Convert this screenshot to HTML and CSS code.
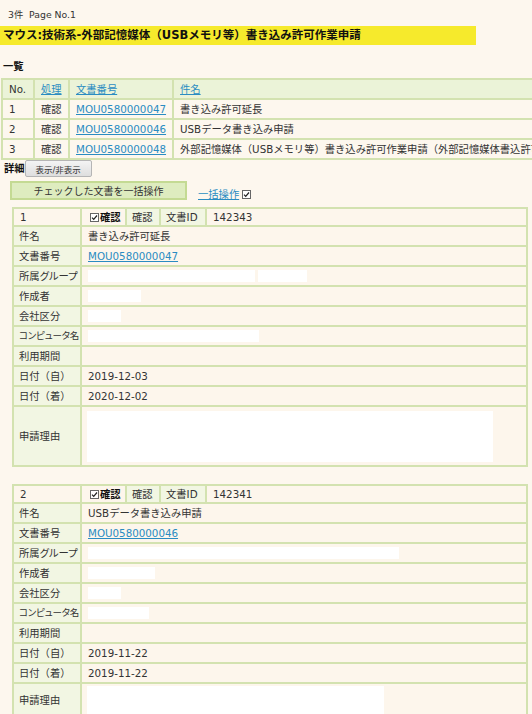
FILE: index.html
```html
<!DOCTYPE html>
<html lang="ja">
<head>
<meta charset="utf-8">
<title>一覧</title>
<link rel="stylesheet" href="styles.css">
</head>
<body>
<div class="count">3件&nbsp; Page No.1</div>
<h1 class="title">マウス:技術系-外部記憶媒体（USBメモリ等）書き込み許可作業申請</h1>
<div class="section-label">一覧</div>
<div class="list-wrap">
  <table class="list">
    <tr class="head">
      <td class="c-no">No.</td>
      <td class="c-op"><a href="#">処理</a></td>
      <td class="c-doc"><a href="#">文書番号</a></td>
      <td class="c-name"><a href="#">件名</a></td>
    </tr>
    <tr>
      <td>1</td><td>確認</td><td><a href="#">MOU0580000047</a></td><td>書き込み許可延長</td>
    </tr>
    <tr>
      <td>2</td><td>確認</td><td><a href="#">MOU0580000046</a></td><td>USBデータ書き込み申請</td>
    </tr>
    <tr>
      <td>3</td><td>確認</td><td><a href="#">MOU0580000048</a></td><td>外部記憶媒体（USBメモリ等）書き込み許可作業申請（外部記憶媒体書込許可申請）</td>
    </tr>
  </table>
</div>
<div class="detail-row">
  <span class="detail-label">詳細</span>
  <button class="toggle-btn" type="button">表示/非表示</button>
</div>
<div class="bulk-row">
  <button class="bulk-btn" type="button">チェックした文書を一括操作</button>
  <a href="#" class="bulk-link">一括操作</a>
  <svg class="cb" width="9" height="9" viewBox="0 0 9 9"><rect x="0.5" y="0.5" width="8" height="8" fill="#fff" stroke="#666"/><path d="M2 4.6 L3.7 6.3 L7 2.5" fill="none" stroke="#222" stroke-width="1.2"/></svg>
</div>

<table class="card">
  <colgroup><col class="w-label"><col class="w-chk"><col class="w-conf"><col class="w-id"><col></colgroup>
  <tr class="first">
    <td class="val">1</td>
    <td class="val chk-cell"><svg class="cb" width="9" height="9" viewBox="0 0 9 9"><rect x="0.5" y="0.5" width="8" height="8" fill="#fff" stroke="#666"/><path d="M2 4.6 L3.7 6.3 L7 2.5" fill="none" stroke="#222" stroke-width="1.2"/></svg><b>確認</b></td>
    <td class="lab">確認</td>
    <td class="lab">文書ID</td>
    <td class="val">142343</td>
  </tr>
  <tr><td class="lab">件名</td><td class="val" colspan="4">書き込み許可延長</td></tr>
  <tr><td class="lab">文書番号</td><td class="val" colspan="4"><a href="#">MOU0580000047</a></td></tr>
  <tr><td class="lab tight">所属グループ</td><td class="val" colspan="4"><span class="redact" style="width:167px"></span><span class="redact gap" style="width:49px"></span></td></tr>
  <tr><td class="lab">作成者</td><td class="val" colspan="4"><span class="redact" style="width:53px"></span></td></tr>
  <tr><td class="lab">会社区分</td><td class="val" colspan="4"><span class="redact" style="width:33px"></span></td></tr>
  <tr><td class="lab tighter">コンピュータ名</td><td class="val" colspan="4"><span class="redact" style="width:171px"></span></td></tr>
  <tr><td class="lab">利用期間</td><td class="val" colspan="4"></td></tr>
  <tr><td class="lab">日付（自）</td><td class="val" colspan="4">2019-12-03</td></tr>
  <tr><td class="lab">日付（着）</td><td class="val" colspan="4">2020-12-02</td></tr>
  <tr class="reason"><td class="lab">申請理由</td><td class="val" colspan="4"><span class="reason-box" style="width:406px"></span></td></tr>
</table>

<table class="card card2">
  <colgroup><col class="w-label"><col class="w-chk"><col class="w-conf"><col class="w-id"><col></colgroup>
  <tr class="first">
    <td class="val">2</td>
    <td class="val chk-cell"><svg class="cb" width="9" height="9" viewBox="0 0 9 9"><rect x="0.5" y="0.5" width="8" height="8" fill="#fff" stroke="#666"/><path d="M2 4.6 L3.7 6.3 L7 2.5" fill="none" stroke="#222" stroke-width="1.2"/></svg><b>確認</b></td>
    <td class="lab">確認</td>
    <td class="lab">文書ID</td>
    <td class="val">142341</td>
  </tr>
  <tr><td class="lab">件名</td><td class="val" colspan="4">USBデータ書き込み申請</td></tr>
  <tr><td class="lab">文書番号</td><td class="val" colspan="4"><a href="#">MOU0580000046</a></td></tr>
  <tr><td class="lab tight">所属グループ</td><td class="val" colspan="4"><span class="redact" style="width:311px"></span></td></tr>
  <tr><td class="lab">作成者</td><td class="val" colspan="4"><span class="redact" style="width:67px"></span></td></tr>
  <tr><td class="lab">会社区分</td><td class="val" colspan="4"><span class="redact" style="width:33px"></span></td></tr>
  <tr><td class="lab tighter">コンピュータ名</td><td class="val" colspan="4"><span class="redact" style="width:61px"></span></td></tr>
  <tr><td class="lab">利用期間</td><td class="val" colspan="4"></td></tr>
  <tr><td class="lab">日付（自）</td><td class="val" colspan="4">2019-11-22</td></tr>
  <tr><td class="lab">日付（着）</td><td class="val" colspan="4">2019-11-22</td></tr>
  <tr class="reason short"><td class="lab">申請理由</td><td class="val" colspan="4"><span class="reason-box short-box" style="width:297px"></span></td></tr>
</table>
</body>
</html>
```
FILE: styles.css
```css
html, body {
  margin: 0;
  padding: 0;
  overflow: hidden;
}
body {
  background: #fdf7ee;
  color: #333;
  font-family: "DejaVu Sans", "Noto Sans CJK JP", sans-serif;
  font-size: 10.3px;
  line-height: 1.2;
}
a {
  color: #2a8cc2;
  text-decoration: underline;
}
.count {
  padding: 9px 0 0 8px;
  font-size: 9.3px;
  line-height: 12px;
}
.title {
  margin: 5px 0 0 0;
  width: 473px;
  height: 19px;
  padding-left: 3px;
  background: #f6ea2c;
  color: #111;
  font-size: 11.5px;
  font-weight: bold;
  line-height: 19px;
  white-space: nowrap;
}
.section-label {
  margin: 15px 0 0 3px;
  font-weight: bold;
  line-height: 12px;
  color: #111;
}
.list-wrap {
  margin-top: 6px;
  margin-left: 1px;
  overflow: hidden;
  width: 531px;
}
.list {
  border-collapse: collapse;
  white-space: nowrap;
  min-width: 800px;
}
.list td {
  border: 2px solid #d3e2b0;
  height: 18px;
  line-height: 14px;
  padding: 0 6px;
  vertical-align: middle;
}
.list .head td { background: #ebf3d8; }
.list .c-no { width: 18px; }
.list .c-op { width: 21px; }
.list .c-doc { width: 86px; }
.list td:last-child { border-right: none; }
.detail-row {
  display: flex;
  align-items: center;
  height: 17px;
  padding-left: 4px;
}
.detail-label {
  font-weight: bold;
  color: #111;
}
.toggle-btn {
  margin-left: 0;
  width: 67px;
  height: 17px;
  padding: 0;
  border: 1px solid #b5b5b5;
  border-radius: 2px;
  background: linear-gradient(#f4f4f4, #dedede);
  font-family: inherit;
  font-size: 8.5px;
  color: #333;
}
.bulk-row {
  display: flex;
  align-items: flex-end;
  margin: 4px 0 0 10px;
  height: 19px;
}
.bulk-btn {
  width: 177px;
  height: 19px;
  padding: 0;
  border: 2px solid #c4da93;
  background: #deecbf;
  font-family: inherit;
  font-size: 10px;
  color: #333;
}
.bulk-link {
  margin-left: 11px;
  line-height: 12px;
}
.bulk-row .cb {
  margin: 0 0 1px 3px;
}
.cb { display: block; flex: none; }
.card {
  margin: 7px 0 0 12px;
  width: 516px;
  border-collapse: collapse;
  table-layout: fixed;
}
.card2 { margin-top: 17px; }
.card .w-label { width: 68px; }
.card .w-chk { width: 45px; }
.card .w-conf { width: 34px; }
.card .w-id { width: 46px; }
.card td {
  border: 2px solid #d3e2b0;
  height: 18px;
  line-height: 14px;
  padding: 0 6px;
  vertical-align: middle;
  white-space: nowrap;
  overflow: hidden;
}
.card .first td { height: 16px; }
.card td.lab {
  background: #f2f6e3;
  padding: 0 0 0 5px;
}
.card td.lab.tight {
  font-feature-settings: "palt";
}
.card td.lab.tighter {
  font-feature-settings: "palt";
  font-size: 9.5px;
  letter-spacing: -0.2px;
}
.card td.val { background: #fdf6ec; }
.card .chk-cell {
  padding-left: 8px;
}
.card .chk-cell .cb {
  display: inline-block;
  vertical-align: -1px;
  margin-right: 1px;
}
.card .chk-cell b { color: #111; }
.card .reason td { height: 58px; }
.card .reason.short td { height: 32px; }
.card .val:has(.redact) { font-size: 0; }
.redact {
  display: inline-block;
  height: 12px;
  background: #fff;
  vertical-align: middle;
}
.redact.gap { margin-left: 3px; }
.reason-box {
  display: block;
  height: 51px;
  background: #fff;
  margin-left: -1px;
}
.reason-box.short-box { height: 28px; }
```
